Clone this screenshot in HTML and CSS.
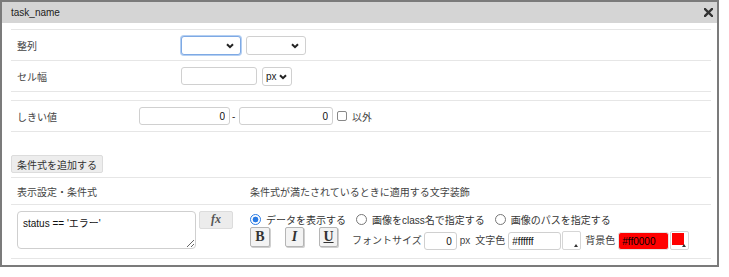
FILE: index.html
```html
<!DOCTYPE html>
<html>
<head>
  <meta charset="utf-8">
  <title>task_name</title>
  <link rel="stylesheet" href="styles.css">
</head>
<body>
  <div class="dialog">
    <div class="titlebar">
      <span class="title">task_name</span>
      <svg class="close" width="9" height="9" viewBox="0 0 9 9">
        <path d="M1 1 L8 8 M8 1 L1 8" stroke="#333" stroke-width="2.4" stroke-linecap="square"/>
      </svg>
    </div>

    <div class="dialog-body">
      <div class="group">
        <div class="row">
          <label class="row-label wide">整列</label>
          <span class="select focused">
            <select class="sel-60"><option></option></select>
            <svg class="chevron" width="8" height="6" viewBox="0 0 8 6"><path d="M1 1.2 L4 4.2 L7 1.2" fill="none" stroke="#222" stroke-width="2"/></svg>
          </span>
          <span class="select">
            <select class="sel-60"><option></option></select>
            <svg class="chevron" width="8" height="6" viewBox="0 0 8 6"><path d="M1 1.2 L4 4.2 L7 1.2" fill="none" stroke="#222" stroke-width="2"/></svg>
          </span>
        </div>
        <div class="row">
          <label class="row-label wide">セル幅</label>
          <input type="text" class="text-input w-76">
          <span class="select">
            <select class="sel-px"><option>px</option></select>
            <svg class="chevron" width="8" height="6" viewBox="0 0 8 6"><path d="M1 1.2 L4 4.2 L7 1.2" fill="none" stroke="#222" stroke-width="2"/></svg>
          </span>
        </div>
      </div>

      <div class="group">
        <div class="row">
          <label class="row-label narrow">しきい値</label>
          <input type="text" class="text-input num w-91" value="0">
          <span class="dash">-</span>
          <input type="text" class="text-input num w-94" value="0">
          <input type="checkbox" class="check" id="except">
          <label for="except" class="check-label">以外</label>
        </div>
      </div>

      <button class="btn-add">条件式を追加する</button>

      <div class="cond-table">
        <div class="cond-head">
          <div class="col-left">表示設定・条件式</div>
          <div class="col-right">条件式が満たされているときに適用する文字装飾</div>
        </div>
        <div class="cond-row">
          <div class="col-left cond-expr">
            <textarea class="expr">status == 'エラー'</textarea>
            <button class="btn-fx">fx</button>
          </div>
          <div class="col-right">
            <div class="radio-row">
              <label class="radio"><input type="radio" name="disp" checked> データを表示する</label>
              <label class="radio"><input type="radio" name="disp"> 画像をclass名で指定する</label>
              <label class="radio"><input type="radio" name="disp"> 画像のパスを指定する</label>
            </div>
            <div class="deco-row">
              <button class="btn-style bold">B</button>
              <button class="btn-style italic">I</button>
              <button class="btn-style under">U</button>
              <span class="deco-label first">フォントサイズ</span>
              <input type="text" class="text-input num w-33" value="0">
              <span class="deco-label">px</span>
              <span class="deco-label">文字色</span>
              <input type="text" class="text-input color-text" value="#ffffff">
              <span class="swatch"><span class="swatch-corner"></span></span>
              <span class="deco-label">背景色</span>
              <input type="text" class="text-input color-text red" value="#ff0000">
              <span class="swatch"><span class="swatch-fill"></span><span class="swatch-corner"></span></span>
            </div>
          </div>
        </div>
      </div>
    </div>
  </div>
</body>
</html>
```

FILE: styles.css
```css
body {
  margin: 0;
  font-family: "Liberation Sans", "Noto Sans CJK JP", sans-serif;
  font-size: 10px;
  color: #333;
  background: #fff;
}

.dialog {
  width: 719px;
  height: 267px;
  border: 2px solid #7b7b7b;
  box-sizing: border-box;
  background: #fff;
}

.titlebar {
  height: 21px;
  background-color: #d5d5d5;
  display: flex;
  align-items: center;
  justify-content: space-between;
  padding: 0 4px 0 9px;
}

.title {
  color: #222;
}

.dialog-body {
  padding: 6px 6px 0 9px;
}

.group {
  border-top: 1px solid #e6e6e6;
}

.group + .group {
  margin-top: 8px;
}

.row {
  display: flex;
  align-items: center;
  height: 30px;
  border-bottom: 1px solid #e6e6e6;
}

.row-label {
  box-sizing: border-box;
  padding-left: 6px;
  color: #444;
}

.row-label.wide {
  width: 170px;
}

.row-label.narrow {
  width: 128px;
}

/* selects */
.select {
  position: relative;
  display: inline-block;
  margin-right: 5px;
  height: 19px;
}

.select select {
  appearance: none;
  -webkit-appearance: none;
  height: 19px;
  border: 1px solid #d0d0d0;
  border-radius: 3px;
  background: #fff;
  padding: 0 3px;
  font: inherit;
  color: #222;
  outline: none;
}

.select.focused select {
  border-color: #7ea9e4;
  box-shadow: 0 0 0 1px #b4cff2;
}

.sel-60 {
  width: 60px;
}

.sel-px {
  width: 30px;
}

.chevron {
  position: absolute;
  right: 5px;
  top: 7px;
  pointer-events: none;
}

.select .sel-60 + .chevron {
  right: 7px;
}

/* inputs */
.text-input {
  box-sizing: border-box;
  height: 18px;
  border: 1px solid #d0d0d0;
  border-radius: 3px;
  padding: 0 4px;
  font: inherit;
  color: #111;
  background: #fff;
}

.text-input.num {
  text-align: right;
}

.w-76 {
  width: 76px;
  margin-right: 5px;
}

.w-91 {
  width: 91px;
}

.w-94 {
  width: 94px;
}

.w-33 {
  width: 33px;
}

.dash {
  width: 9px;
  padding-left: 2px;
  box-sizing: border-box;
}

.check {
  appearance: none;
  -webkit-appearance: none;
  width: 10px;
  height: 10px;
  border: 1px solid #888;
  border-radius: 2px;
  margin: 0 5px 0 4px;
  background: #fff;
}

.check-label {
  color: #444;
}

/* add button */
.btn-add {
  display: block;
  margin-top: 23px;
  height: 18px;
  padding: 0 5px;
  background-color: #ededed;
  border: 1px solid #dcdcdc;
  border-radius: 2px;
  font: inherit;
  color: #333;
}

/* condition table */
.cond-table {
  margin-top: 4px;
  border-top: 1px solid #e6e6e6;
}

.cond-head {
  display: flex;
  align-items: center;
  height: 26px;
  border-bottom: 1px solid #e6e6e6;
  color: #444;
}

.col-left {
  width: 239px;
  box-sizing: border-box;
  padding-left: 6px;
  flex-shrink: 0;
}

.col-right {
  flex: 1;
}

.cond-row {
  display: flex;
  align-items: flex-start;
  height: 53px;
  border-bottom: 1px solid #e6e6e6;
}

.cond-expr {
  display: flex;
  align-items: flex-start;
  padding-top: 6px;
}

.expr {
  box-sizing: border-box;
  width: 179px;
  height: 38px;
  border: 1px solid #cfcfcf;
  border-radius: 4px;
  padding: 3px 5px;
  font: inherit;
  color: #111;
  margin: 0;
}

.btn-fx {
  margin-left: 3px;
  width: 34px;
  height: 18px;
  padding: 0 0 2px;
  background-color: #ececec;
  border: 1px solid #dcdcdc;
  border-radius: 2px;
  font-family: "Liberation Serif", serif;
  font-style: italic;
  font-weight: bold;
  font-size: 12px;
  color: #555;
}

.radio-row {
  display: flex;
  align-items: center;
  height: 14px;
  margin-top: 7px;
}

.radio {
  display: flex;
  align-items: center;
  margin-right: 10px;
  color: #333;
}

.radio input {
  appearance: none;
  -webkit-appearance: none;
  width: 11px;
  height: 11px;
  margin: 0 5px 0 0;
  border: 1px solid #777;
  border-radius: 50%;
  background: #fff;
}

.radio input:checked {
  border: 1px solid #2a7be4;
  background: radial-gradient(circle, #2a7be4 0 2.6px, #fff 3.2px);
}

.deco-row {
  display: flex;
  align-items: flex-end;
  height: 23px;
  margin-top: 1px;
}

.btn-style {
  width: 20px;
  height: 20px;
  margin: 0 15px 3px 0;
  padding: 0;
  background: #f3f3f3;
  border: 1px solid #b5b5b5;
  border-radius: 2px;
  box-shadow: 1px 1px 0 #cfcfcf;
  font-family: "Liberation Serif", serif;
  font-size: 14px;
  font-weight: bold;
  color: #333;
}

.btn-style.italic {
  font-style: italic;
  width: 19px;
}

.btn-style.under {
  text-decoration: underline;
  width: 19px;
}

.deco-label {
  line-height: 18px;
  margin-right: 3px;
  color: #444;
}

.deco-label.first {
  margin-right: 2px;
  margin-left: -1px;
}

.w-33 + .deco-label {
  margin-left: 3px;
  margin-right: 5px;
}

.color-text {
  width: 53px;
  text-align: left;
  padding-left: 3px;
}

.color-text.red {
  width: 51px;
  background-color: #ff0000;
  border-color: #e4e4e4;
  color: #000;
}

.swatch {
  position: relative;
  display: inline-block;
  box-sizing: border-box;
  width: 19px;
  height: 19px;
  margin: 0 4px 0 1px;
  border: 1px solid #d6d6d6;
  border-radius: 2px;
  background: #fff;
}

.swatch-fill {
  position: absolute;
  top: 1px;
  left: 1px;
  right: 4px;
  bottom: 4px;
  background: #ff0000;
}

.swatch-corner {
  position: absolute;
  right: 2px;
  bottom: 2px;
  width: 0;
  height: 0;
  border-left: 2px solid transparent;
  border-right: 2px solid transparent;
  border-bottom: 3px solid #333;
}
```
